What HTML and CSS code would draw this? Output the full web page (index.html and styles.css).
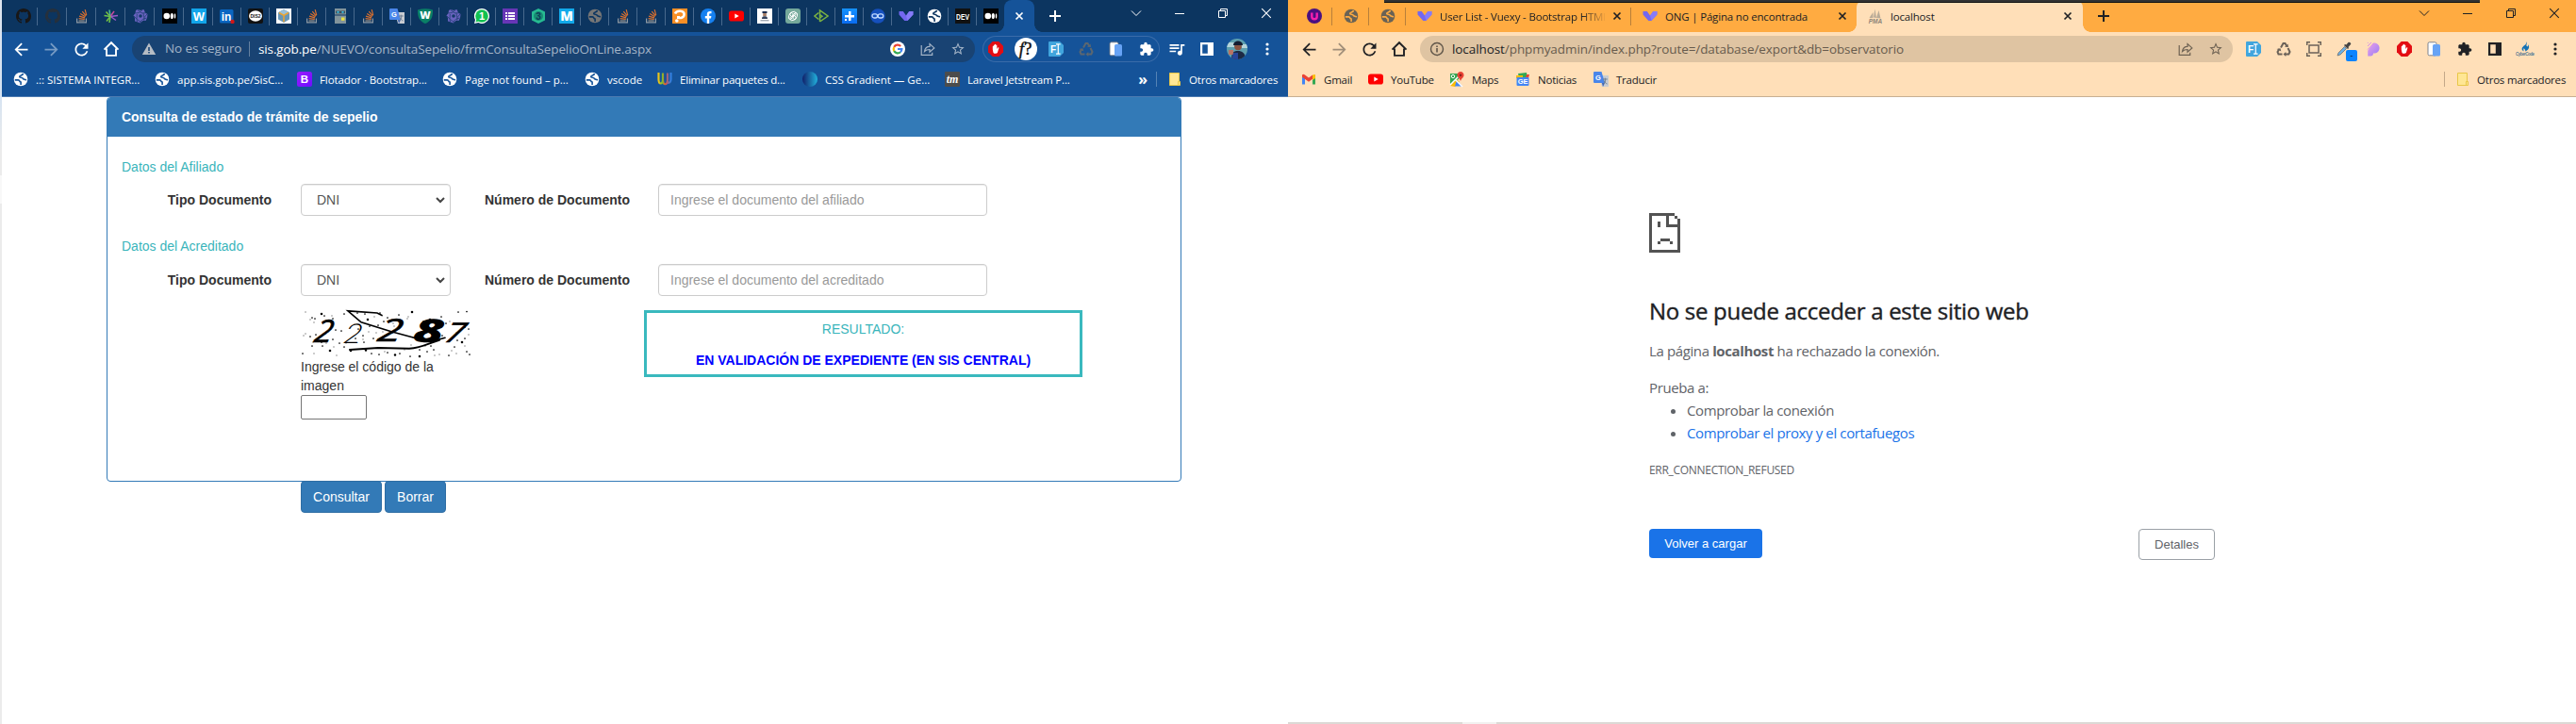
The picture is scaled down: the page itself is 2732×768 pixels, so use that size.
FILE: index.html
```html
<!DOCTYPE html>
<html lang="es">
<head>
<meta charset="utf-8">
<title>Escritorio</title>
<link rel="stylesheet" href="styles.css">
</head>
<body>
<svg class="defs" aria-hidden="true">
  <defs>
    <linearGradient id="g-css" x1="0" x2="1"><stop offset="0" stop-color="#10206a"/><stop offset="1" stop-color="#22b1dc"/></linearGradient>
    <linearGradient id="g-w" x1="0" x2="1"><stop offset="0" stop-color="#e9c21c"/><stop offset=".3" stop-color="#7fbf2a"/><stop offset=".55" stop-color="#e8503a"/><stop offset="1" stop-color="#2f7fe0"/></linearGradient>
    <linearGradient id="g-p" x1="0" y1="0" x2="1" y2="1"><stop offset="0" stop-color="#e9a0e8"/><stop offset="1" stop-color="#9a7cf5"/></linearGradient>
    <linearGradient id="g-b" x1="0" y1="0" x2="1" y2="1"><stop offset="0" stop-color="#9a1bff"/><stop offset="1" stop-color="#6c0fff"/></linearGradient>
    <linearGradient id="g-plus" x1="0" y1="0" x2="0" y2="1"><stop offset="0" stop-color="#1592ff"/><stop offset="1" stop-color="#0a6cf0"/></linearGradient>
    <symbol id="gh" viewBox="0 0 16 16"><path fill="currentColor" d="M8 0C3.58 0 0 3.58 0 8c0 3.54 2.29 6.53 5.47 7.59.4.07.55-.17.55-.38 0-.19-.01-.82-.01-1.49-2.01.37-2.53-.49-2.69-.94-.09-.23-.48-.94-.82-1.13-.28-.15-.68-.52-.01-.53.63-.01 1.08.58 1.23.82.72 1.21 1.87.87 2.33.66.07-.52.28-.87.51-1.07-1.78-.2-3.64-.89-3.64-3.95 0-.87.31-1.59.82-2.15-.08-.2-.36-1.02.08-2.12 0 0 .67-.21 2.2.82.64-.18 1.32-.27 2-.27s1.36.09 2 .27c1.53-1.04 2.2-.82 2.2-.82.44 1.1.16 1.92.08 2.12.51.56.82 1.27.82 2.15 0 3.07-1.87 3.75-3.65 3.95.29.25.54.73.54 1.48 0 1.07-.01 1.93-.01 2.2 0 .21.15.46.55.38A8.01 8.01 0 0 0 16 8c0-4.42-3.58-8-8-8z"/></symbol>
    <symbol id="so" viewBox="0 0 16 16"><g fill="none"><path stroke="#8f9aa3" stroke-width="1.2" d="M2.6 10.5v4.4h9.8v-4.4"/><path stroke="#9a8f88" stroke-width="1.2" d="M4.5 13h6.2"/><path stroke="#d8702f" stroke-width="1.2" d="M4.6 10.7l6.2.6M5 8.2l6 1.7M6.2 5.6l5.3 3.2M8.3 3.1l3.9 4.8M11.2 1.2l1.5 6"/></g></symbol>
    <symbol id="burst" viewBox="0 0 16 16"><g fill="none" stroke-width="1.500"><path stroke="#7ac142" d="M7 8.500L2.500 3.500M7 8.500l-4 5"/><path stroke="#4dbf9b" d="M7 8.500L6 1.500"/><path stroke="#c9499a" d="M7 8.500L11 3"/><path stroke="#9b59c8" d="M7 8.500l8-1M7.400 8.500l5.500 4"/></g><path stroke="#69c24a" stroke-width="1.600" d="M7 8l-1 7M.5 7.500L7 8.500"/></symbol>
    <symbol id="knot" viewBox="0 0 16 16"><path fill="#6a63c0" d="M5 1l3 1 3.500-1L13 4.500l2.500 1.500L15 10l-1.500 3-3.200 0L8 15.500 5 14.500 2 13.500 2 10 .5 7.500 2.500 5 3 2z"/><path fill="none" stroke="#123a68" stroke-width=".7" d="M5 1.500l4 3.300 4.500 0M2.500 5l4-.5 3.500-3M1 8l3 3.200.5 3.300M4 11l.3-5M9 15l-4.500-3.500M14.500 10l-4 1.300-3 3M15 6l-3 3.500-.2 3.500M11.800 9.500L11 5"/><circle cx="8" cy="8" r="1.800" fill="#123a68"/></symbol>
    <symbol id="medium" viewBox="0 0 16 16"><path d="M0 0h16v16H0z"/><g fill="#fff"><circle cx="4.800" cy="8" r="3.300"/><ellipse cx="10.300" cy="8" rx="1.600" ry="3.100"/><ellipse cx="13.500" cy="8" rx=".8" ry="2.700"/></g></symbol>
    <symbol id="wsq" viewBox="0 0 16 16"><path fill="#12a5ea" d="M0 0h16v16H0z"/><text x="8" y="13" class="t-bold" font-size="13" fill="#fff">W</text></symbol>
    <symbol id="linkedin" viewBox="0 0 16 16"><rect width="14.500" height="14.500" y="1" rx="1.500" fill="#0a66c2"/><text x="7" y="13" class="t-bold" font-size="12" fill="#fff">in</text><circle cx="13.500" cy="14" r="2.200" fill="#d31616"/></symbol>
    <symbol id="badge" viewBox="0 0 16 16"><rect width="16" height="16" rx="2" fill="#111"/><ellipse cx="8" cy="8" rx="7" ry="5.800" fill="#fff"/><text x="8" y="10" class="t-bold" font-size="5" fill="#222">DIS2</text></symbol>
    <symbol id="cube" viewBox="0 0 16 16"><path fill="#fff" d="M0 0h16v16H0z"/><path fill="#6796b8" d="M8 1l6 3.300v7.200L8 15l-6-3.500V4.300z"/><path fill="#9ac0d8" d="M8 1l6 3.300L8 7.600 2 4.300z"/><path fill="none" stroke="#eea42d" stroke-width="1.500" d="M3 4.500l5 3 5-3M8 7.500v6.800"/></symbol>
    <symbol id="bot" viewBox="0 0 16 16"><path fill="#82949b" d="M2 0h12v6.500H2zM2 7.500h12V16H2z"/><path fill="#3e505a" d="M3 2.500h10v2.800H3z"/><path fill="#35c5ee" d="M4.500 3h2v1.800h-2zM9.500 3h2v1.800h-2z"/><path fill="#e8df3e" d="M9 9.500h3.500v3.300H9z"/></symbol>
    <symbol id="trans" viewBox="0 0 16 16"><path fill="#c8ccd2" d="M6 4h10v12H9z"/><path fill="#4a86ea" d="M1 0h7.500l3.500 12H1a1 1 0 0 1-1-1V1a1 1 0 0 1 1-1z"/><path fill="#355fb5" d="M9 12h3l-2 4z"/><text x="4.800" y="9" class="t-bold" font-size="7.500" fill="#fff">G</text><path fill="none" stroke="#6e7f92" d="M9.800 8h5M12.300 6.700V8c1 2.600-1 4.500-2 5M11 9.500c1 2 2 3 3.500 3.500"/></symbol>
    <symbol id="wgreen" viewBox="0 0 16 16"><path fill="#0a8066" d="M0 1.500Q8-1 16 1.500C16.300 9 14 13.500 8 16 2 13.500-.3 9 0 1.500z"/><text x="8" y="11" class="t-black" font-size="11" fill="#fff">W</text></symbol>
    <symbol id="wa" viewBox="0 0 16 16"><path fill="#fff" d="M8 0a8 8 0 1 1-3.700 15.100L0 16l1-4A8 8 0 0 1 8 0z"/><circle cx="8" cy="8" r="6.800" fill="#12c152"/><path fill="#12c152" d="M1.500 14.500l1-3.500 2.500 2.500z"/><text x="8" y="12" class="t-bold" font-size="11" fill="#fff">1</text></symbol>
    <symbol id="forms" viewBox="0 0 16 16"><rect width="16" height="16" fill="#6736b6"/><path fill="#fff" d="M3 4h2v2H3zM6 4h7v2H6zM3 7h2v2H3zM6 7h7v2H6zM3 10h2v2H3zM6 10h7v2H6z"/></symbol>
    <symbol id="hex3" viewBox="0 0 16 16"><path fill="#27bb92" d="M8 0l7 3.600v8.800L8 16l-7-3.600V3.600z"/><circle cx="8" cy="8" r="5" fill="#178b74"/><text x="8" y="11.500" class="t-bold" font-size="10" fill="#0d3a58">3</text></symbol>
    <symbol id="msq" viewBox="0 0 16 16"><path fill="#12a9ea" d="M0 0h16v16H0z"/><text x="8" y="13" class="t-black" font-size="14" fill="#fff">M</text></symbol>
    <symbol id="globe" viewBox="0 0 16 16"><circle cx="8" cy="8" r="7.300" fill="currentColor"/><g fill="none" stroke="var(--cut)" stroke-width="1.600"><path d="M1.800 8.900h3.600c1.800 0 .8 2 2.700 2.200v3"/><path d="M10.300 2c.3 2.300-3.600 1.600-3.600 3.300 0 1.500 2.700.3 3.500 1.800.5 1.500 1.800 1.600 3.900 1.700"/></g></symbol>
    <symbol id="porange" viewBox="0 0 16 16"><path fill="#f98f25" d="M0 0h16v16H0z"/><path fill="none" stroke="#fff" stroke-width="2.600" d="M3 5.500C4.500 1.500 12.800 1.800 12.600 6.300c-.2 4-4.600 4.200-6.600 3.200"/><circle cx="4.800" cy="13" r="1.800" fill="#fff"/><path fill="#fff" d="M5 8h3v3H5z"/></symbol>
    <symbol id="fb" viewBox="0 0 16 16"><circle cx="8" cy="8" r="8" fill="#1580f0"/><path fill="#fff" d="M6.800 16v-5.500H4.800V8h2V6.300c0-2.100 1.200-3.200 3-3.200.9 0 1.700.1 1.700.1v2h-1c-1 0-1.300.6-1.300 1.200V8h2.200l-.4 2.500H9.200V16z"/></symbol>
    <symbol id="yt" viewBox="0 0 16 16"><rect y="2.400" width="16" height="11.200" rx="2.800" fill="#f00"/><path fill="#fff" d="M6.300 5.500v5l4.400-2.500z"/></symbol>
    <symbol id="person" viewBox="0 0 16 16"><path fill="#fff" d="M0 0h16v16H0z"/><path fill="#1d2f50" d="M5.500 3h5v2h-5z"/><path fill="#a87e66" d="M6.200 5h3.600v3H6.200z"/><path fill="#33415c" d="M5 11c0-2.300 1.300-2.700 3-2.700s3 .4 3 2.700z"/><path fill="#7d8797" d="M3.500 12.300h9v1h-9z"/></symbol>
    <symbol id="gpt" viewBox="0 0 16 16"><rect width="16" height="16" rx="3" fill="#75a99b"/><g fill="none" stroke="#fff" stroke-width=".9"><ellipse cx="8" cy="5.800" rx="3.300" ry="2.300" transform="rotate(-20 8 5.800)"/><ellipse cx="8" cy="10.200" rx="3.300" ry="2.300" transform="rotate(-20 8 10.200)"/><ellipse cx="5.700" cy="8" rx="2" ry="3.800" transform="rotate(20 5.700 8)"/><ellipse cx="10.300" cy="8" rx="2" ry="3.800" transform="rotate(20 10.300 8)"/></g></symbol>
    <symbol id="code" viewBox="0 0 16 16"><g fill="none" stroke="#7cb342" stroke-width="1.500"><path d="M5.200 4.500L1 8l4.200 3.500M6.500 14V2l8.500 6-8.500 6"/><path d="M6.500 6.500L9 8.200 6.500 10"/></g></symbol>
    <symbol id="plussq" viewBox="0 0 16 16"><path fill="url(#g-plus)" d="M0 0h16v16H0z"/><path fill="#fff" d="M7 3h2.500v4H13v2.500H9.500V13H7V9.500H3V7h4zM3 11h2v2H3z"/></symbol>
    <symbol id="cc" viewBox="0 0 16 16"><circle cx="8" cy="8" r="7.800" fill="#1650bd"/><g fill="none" stroke="#c4dcff" stroke-width="1.300"><rect x="2" y="5.800" width="5.500" height="4.200" rx="2"/><rect x="8.200" y="5.800" width="5.500" height="4.200" rx="2"/></g></symbol>
    <symbol id="vuexy" viewBox="0 0 16 16"><path fill="#7367f0" d="M.5 3h4.300L8 7.500 11.200 3h4.300v3.500L9.500 13H6.300L.5 6.500z"/><path fill="#9388ff" d="M11.200 3h4.300v3.500L9.500 13 8 7.500z" opacity=".6"/></symbol>
    <symbol id="dev" viewBox="0 0 16 16"><path fill="#111" d="M0 0h16v16H0z"/><text x="8" y="11.800" class="t-bold" font-size="8.500" textLength="14" lengthAdjust="spacingAndGlyphs" fill="#fff">DEV</text></symbol>
    <symbol id="ucircle" viewBox="0 0 16 16"><circle cx="8" cy="8" r="8" fill="#4a1080"/><path d="M5.300 4.500v4.300c0 3.300 5.400 3.300 5.400 0V4.500" fill="none" stroke="#f51fae" stroke-width="2.400"/></symbol>
    <symbol id="pma" viewBox="0 0 16 16"><path fill="#b9ab97" d="M6 9.500L7.500.5 9 10zM1.500 10l4-6v6zM9 10l2.500-8 2 8.500z"/><text x="8" y="15.700" class="t-bold" font-size="6.500" font-style="italic" fill="#8d8478">PMA</text></symbol>
    <symbol id="back" viewBox="0 0 24 24"><path fill="currentColor" d="M20 11H7.830l5.590-5.590L12 4l-8 8 8 8 1.410-1.410L7.830 13H20v-2z"/></symbol>
    <symbol id="reload" viewBox="0 0 24 24"><path fill="currentColor" d="M17.650 6.350C16.200 4.900 14.210 4 12 4c-4.420 0-7.990 3.580-7.990 8s3.570 8 7.990 8c3.730 0 6.840-2.550 7.730-6h-2.080c-.82 2.330-3.040 4-5.650 4-3.310 0-6-2.690-6-6s2.690-6 6-6c1.660 0 3.140.69 4.220 1.780L13 11h7V4l-2.350 2.350z"/></symbol>
    <symbol id="home" viewBox="0 0 18 18"><path fill="none" stroke="currentColor" stroke-width="1.900" d="M1.500 9.600L9 2.200l7.500 7.400M4 8.500v7.400h10V8.500"/></symbol>
    <symbol id="star" viewBox="0 0 24 24"><path fill="currentColor" d="M22 9.240l-7.190-.62L12 2 9.190 8.630 2 9.240l5.460 4.730L5.820 21 12 17.270 18.180 21l-1.630-7.030L22 9.240zM12 15.400l-3.760 2.270 1-4.280-3.320-2.880 4.380-.38L12 6.100l1.710 4.040 4.380.38-3.320 2.880 1 4.280L12 15.400z"/></symbol>
    <symbol id="share" viewBox="0 0 16 16"><path fill="none" stroke="currentColor" stroke-width="1.200" d="M1.200 4v10.400h11.500v-2.600M4.500 10.500C5 6.500 7 5.300 10 5.300V2.600l4.800 4.300-4.800 4.200V8.500c-2.500 0-4 .3-5.500 2z"/></symbol>
    <symbol id="puzzle" viewBox="0 0 24 24"><path fill="currentColor" d="M20.500 11H19V7c0-1.100-.9-2-2-2h-4V3.500C13 2.120 11.880 1 10.500 1S8 2.120 8 3.500V5H4c-1.100 0-1.990.9-1.990 2v3.800H3.500c1.490 0 2.700 1.210 2.700 2.700s-1.210 2.700-2.700 2.700H2V20c0 1.100.9 2 2 2h3.800v-1.500c0-1.490 1.210-2.700 2.700-2.700 1.490 0 2.700 1.210 2.700 2.700V22H17c1.100 0 2-.9 2-2v-4h1.500c1.380 0 2.500-1.120 2.500-2.500S21.880 11 20.500 11z"/></symbol>
    <symbol id="queue" viewBox="0 0 24 24"><path fill="currentColor" d="M15 6H3v2h12V6zm0 4H3v2h12v-2zM3 16h8v-2H3v2zM17 6v8.180c-.31-.11-.65-.18-1-.18-1.660 0-3 1.340-3 3s1.340 3 3 3 3-1.340 3-3V8h3V6h-5z"/></symbol>
    <symbol id="side" viewBox="0 0 16 16"><path fill="currentColor" fill-rule="evenodd" d="M1 1h14v14H1zM3.200 3.200v9.600h5.600V3.200z"/></symbol>
    <symbol id="dots" viewBox="0 0 16 16"><g fill="currentColor"><circle cx="8" cy="3" r="1.600"/><circle cx="8" cy="8" r="1.600"/><circle cx="8" cy="13" r="1.600"/></g></symbol>
    <symbol id="abp" viewBox="0 0 16 16"><path fill="#e30d13" d="M4.700 0h6.600L16 4.700v6.600L11.300 16H4.700L0 11.300V4.700z"/><path fill="#fff" d="M4.800 8.500V5.300c0-.8 1-.8 1 0V4c0-.8 1.100-.8 1.100 0v-.6c0-.8 1.200-.8 1.200 0V4c0-.8 1.200-.8 1.200 0v4l1-1.500c.6-.6 1.300 0 1 .7L9.800 12c-.6 1-3.600 1.200-4.300 0z"/></symbol>
    <symbol id="fquest" viewBox="0 0 24 24"><circle cx="12" cy="12" r="12" fill="#fff"/><text x="11.500" y="17.500" class="t-serif" font-size="19" stroke="#111" stroke-width=".4" fill="#111"><tspan font-style="italic">f</tspan>?</text></symbol>
    <symbol id="fi" viewBox="0 0 16 16"><path fill="#41a5dd" d="M1 0h11l4 4v8l-4 4H1a1 1 0 0 1-1-1V1a1 1 0 0 1 1-1z"/><text x="5" y="11.700" class="t-bold" font-size="10" fill="#fff">F</text><path fill="none" stroke="#fff" stroke-width="1.200" d="M8 2.800h4.600M8 13.200h4.600M10.300 2.800v10.400"/></symbol>
    <symbol id="recycle" viewBox="0 0 16 16"><g fill="none" stroke="currentColor" stroke-width="2"><path d="M5 6.500L7.500 2h2l1.800 3"/><path d="M12.500 7l2 4-1.200 2.500H9.500"/><path d="M6.500 13.500h-4L1.500 11l1.800-3"/></g><path fill="currentColor" d="M9 5.800l4 .2-.5-3.500zM10.300 11v5L7.500 13.500zM.5 8l4-.8.800 3.200z"/></symbol>
    <symbol id="doc" viewBox="0 0 16 16"><rect x="1" y=".8" width="9" height="14" rx="1.500" fill="#fff" stroke="#6c7686" stroke-width=".9"/><rect x="6" y="3" width="8" height="12.500" rx="1.500" fill="#67a3f5"/></symbol>
    <symbol id="frame" viewBox="0 0 16 16"><path fill="none" stroke="currentColor" stroke-width="1.500" d="M.7 4V.8H4M12 .8h3.300V4M15.300 12v3.200H12M4 15.200H.7V12M3 4h10v8H3z"/></symbol>
    <symbol id="dropper" viewBox="0 0 16 16"><path fill="#6db1e5" stroke="#666" stroke-width=".7" d="M1 15l1-3 6.500-6.500 2 2L4 14z"/><path fill="#444" d="M8 4l1-1 1.300.6L12.500 1c1-1.200 3.500.8 2.600 2L12.500 6l.5 1-1 1z"/></symbol>
    <symbol id="pgrad" viewBox="0 0 16 16"><path fill="url(#g-p)" d="M7 1.500a5.500 5.500 0 0 1 2 11H7c0 2-1 3-3 3H1.200V9.800z"/><path stroke="#d88ce8" stroke-width="1" d="M1 5l4-4M1 8.500L7.500 2M1 1.800l.8-.8"/></symbol>
    <symbol id="cyber" viewBox="0 0 20 16"><path fill="#1572b5" d="M11 0c2 3-1 4 1.500 5.500C13.500 4.500 13 3 13 3c2.500 3 .5 6.500-3 7.500 1-2-1-2-1-3.500-1 1-1 2.500 0 3.500C5 9 6.500 6 9.500 4c1.500-1 2-2.500 1.500-4z"/><text x="10" y="15" class="t-bold" font-size="4.500" fill="#567b95" textLength="20">CyberCode</text></symbol>
    <symbol id="chev" viewBox="0 0 16 16"><path fill="none" stroke="currentColor" d="M3 5.500l5 5 5-5"/></symbol>
    <symbol id="min" viewBox="0 0 16 16"><path fill="none" stroke="currentColor" d="M3 8.500h10"/></symbol>
    <symbol id="restore" viewBox="0 0 16 16"><path fill="none" stroke="currentColor" d="M3.500 5.500h7v7h-7zM5.500 5.500v-2h7v7h-2"/></symbol>
    <symbol id="close" viewBox="0 0 16 16"><path fill="none" stroke="currentColor" stroke-width="1.100" d="M3.200 3.200l9.600 9.600M12.800 3.200l-9.600 9.600"/></symbol>
    <symbol id="tabx" viewBox="0 0 16 16"><path fill="none" stroke="currentColor" stroke-width="1.700" d="M4.500 4.500l7 7M11.500 4.500l-7 7"/></symbol>
    <symbol id="plus" viewBox="0 0 16 16"><path fill="none" stroke="currentColor" stroke-width="2" d="M8 2v12M2 8h12"/></symbol>
    <symbol id="folder" viewBox="0 0 14 16"><path fill="#ffe694" stroke="#e8c648" d="M1.500 1.500h10v13h-10z"/><path fill="#ffe694" stroke="#e8c648" d="M10.500 10.500h2v4h-2z"/></symbol>
  </defs>
</svg>

<main class="desktop">
  <div class="edge"></div>

  <section class="window blue">
    <header class="tabbar">
      <div class="tabs">
        <span class="tab wide"><svg class="i16 gh1"><use href="#gh"/></svg></span>
        <span class="tab wide"><svg class="i16 gh2"><use href="#gh"/></svg></span>
        <span class="tab wide"><svg class="i16"><use href="#so"/></svg></span>
        <span class="tab wide"><svg class="i16"><use href="#burst"/></svg></span>
        <span class="tab wide"><svg class="i16"><use href="#knot"/></svg></span>
        <span class="tab wide"><svg class="i16"><use href="#medium"/></svg></span>
        <span class="tab wide"><svg class="i16"><use href="#wsq"/></svg></span>
        <span class="tab"><svg class="i16"><use href="#linkedin"/></svg></span>
        <span class="tab"><svg class="i16"><use href="#badge"/></svg></span>
        <span class="tab"><svg class="i16"><use href="#cube"/></svg></span>
        <span class="tab"><svg class="i16"><use href="#so"/></svg></span>
        <span class="tab"><svg class="i16"><use href="#bot"/></svg></span>
        <span class="tab"><svg class="i16"><use href="#so"/></svg></span>
        <span class="tab"><svg class="i16"><use href="#trans"/></svg></span>
        <span class="tab"><svg class="i16"><use href="#wgreen"/></svg></span>
        <span class="tab"><svg class="i16"><use href="#knot"/></svg></span>
        <span class="tab"><svg class="i16"><use href="#wa"/></svg></span>
        <span class="tab"><svg class="i16"><use href="#forms"/></svg></span>
        <span class="tab"><svg class="i16"><use href="#hex3"/></svg></span>
        <span class="tab"><svg class="i16"><use href="#msq"/></svg></span>
        <span class="tab"><svg class="i16 gray"><use href="#globe"/></svg></span>
        <span class="tab"><svg class="i16"><use href="#so"/></svg></span>
        <span class="tab"><svg class="i16"><use href="#so"/></svg></span>
        <span class="tab"><svg class="i16"><use href="#porange"/></svg></span>
        <span class="tab"><svg class="i16"><use href="#fb"/></svg></span>
        <span class="tab"><svg class="i16"><use href="#yt"/></svg></span>
        <span class="tab"><svg class="i16"><use href="#person"/></svg></span>
        <span class="tab"><svg class="i16"><use href="#gpt"/></svg></span>
        <span class="tab"><svg class="i16"><use href="#code"/></svg></span>
        <span class="tab"><svg class="i16"><use href="#plussq"/></svg></span>
        <span class="tab"><svg class="i16"><use href="#cc"/></svg></span>
        <span class="tab"><svg class="i16"><use href="#vuexy"/></svg></span>
        <span class="tab"><svg class="i16"><use href="#globe"/></svg></span>
        <span class="tab"><svg class="i16"><use href="#dev"/></svg></span>
        <span class="tab last"><svg class="i16"><use href="#medium"/></svg></span>
        <span class="tab active"><svg class="i16"><use href="#tabx"/></svg></span>
        <svg class="i16 newtab"><use href="#plus"/></svg>
      </div>
      <div class="controls">
        <svg class="i16"><use href="#chev"/></svg><svg class="i16"><use href="#min"/></svg><svg class="i16"><use href="#restore"/></svg><svg class="i16"><use href="#close"/></svg>
      </div>
    </header>
    <div class="toolbar">
      <span class="cell"><svg class="i21"><use href="#back"/></svg></span>
      <span class="cell off"><svg class="i21 flip"><use href="#back"/></svg></span>
      <span class="cell"><svg class="i21"><use href="#reload"/></svg></span>
      <span class="cell"><svg class="i18"><use href="#home"/></svg></span>
      <div class="omnibox">
        <svg class="i16" viewBox="0 0 16 16"><path fill="#b6bcc4" fill-rule="evenodd" d="M8 1.500L15.200 14H.8zM7.200 6v4h1.600V6zm0 5v1.500h1.600V11z"/></svg>
        <span class="insecure">No es seguro</span>
        <span class="url"><b>sis.gob.pe</b>/NUEVO/consultaSepelio/frmConsultaSepelioOnLine.aspx</span>
        <span class="actions">
          <svg class="i16" viewBox="0 0 16 16"><circle cx="8" cy="8" r="8" fill="#fff"/><g fill="none" stroke-width="2.200"><path stroke="#ea4335" d="M4.200 5.900A4.400 4.400 0 0 1 11.200 5"/><path stroke="#fbbc05" d="M4.200 10.100a4.400 4.400 0 0 1 0-4.200"/><path stroke="#34a853" d="M11 11.200a4.400 4.400 0 0 1-6.800-1.100"/><path stroke="#4285f4" d="M8 8h4.400a4.400 4.400 0 0 1-1.400 3.200"/></g></svg>
          <svg class="i16"><use href="#share"/></svg>
          <svg class="i16"><use href="#star"/></svg>
        </span>
      </div>
      <div class="pill">
        <svg class="i16"><use href="#abp"/></svg>
        <span class="slot"><svg class="i24"><use href="#fquest"/></svg></span>
        <svg class="i16"><use href="#fi"/></svg>
        <svg class="i16 brown"><use href="#recycle"/></svg>
        <svg class="i16"><use href="#doc"/></svg>
        <svg class="i16"><use href="#puzzle"/></svg>
      </div>
      <span class="cell"><svg class="i20"><use href="#queue"/></svg></span>
      <span class="cell"><svg class="i16"><use href="#side"/></svg></span>
      <span class="cell"><svg class="i22" viewBox="0 0 22 22"><clipPath id="av"><circle cx="11" cy="11" r="11"/></clipPath><g clip-path="url(#av)"><path fill="#5d9fae" d="M0 0h22v22H0z"/><path fill="#b5d4d9" d="M0 4h8v5H0zM16 6h6v4h-6z"/><path fill="#1d2a45" d="M5 22c0-8 3-9 7-9s8 2 8 9z"/><circle cx="12" cy="8.500" r="3.800" fill="#8a5340"/><path fill="#141c30" d="M7 7c0-6 10-6 10 0z"/><path fill="#b97464" d="M2 12h5v5H2z"/><path fill="#27469b" d="M7 15h5v7H5z"/></g></svg></span>
      <span class="cell"><svg class="i16"><use href="#dots"/></svg></span>
    </div>
    <nav class="bookmarks">
      <span class="bm w150"><svg class="i16"><use href="#globe"/></svg><span class="l1">.:: SISTEMA INTEGR...</span></span>
      <span class="bm w151"><svg class="i16"><use href="#globe"/></svg><span class="l2">app.sis.gob.pe/SisC...</span></span>
      <span class="bm w154"><svg class="i16" viewBox="0 0 16 16"><rect width="16" height="16" rx="2.500" fill="url(#g-b)"/><text x="8" y="12.200" class="t-bold" font-size="11.500" fill="#fff">B</text></svg><span class="l3">Flotador · Bootstrap...</span></span>
      <span class="bm w151"><svg class="i16"><use href="#globe"/></svg><span class="l4">Page not found – p...</span></span>
      <span class="bm w77"><svg class="i16"><use href="#globe"/></svg><span class="l5">vscode</span></span>
      <span class="bm w154"><svg class="i16" viewBox="0 0 16 16"><path fill="none" stroke="url(#g-w)" stroke-width="2.200" d="M1.500 1v7c0 6 4.500 6 4.500 0V1.500M6 8c0 7 5 7 5 0V1.500M11 12c2.500 0 3.500-2 3.500-4V1"/></svg><span class="l6">Eliminar paquetes d...</span></span>
      <span class="bm w151"><svg class="i16" viewBox="0 0 16 16"><circle cx="8" cy="8" r="8" fill="url(#g-css)"/></svg><span class="l7">CSS Gradient — Ge...</span></span>
      <span class="bm"><svg class="i16" viewBox="0 0 16 16"><rect width="16" height="16" rx="1" fill="#4c4c4c"/><text x="8" y="12" class="t-serif t-heavy" font-size="12" font-style="italic" fill="#fff">tm</text></svg><span class="l8">Laravel Jetstream P...</span></span>
      <span class="more">»</span>
      <span class="other"><svg class="fold"><use href="#folder"/></svg><span>Otros marcadores</span></span>
    </nav>
    <div class="page sis">
      <div class="panel">
        <h3 class="heading">Consulta de estado de trámite de sepelio</h3>
        <div class="panelbody">
          <p class="section">Datos del Afiliado</p>
          <div class="row">
            <label class="first">Tipo Documento</label>
            <div class="select">DNI<svg viewBox="0 0 10 6"><path d="M1 1l4 4 4-4" fill="none" stroke="#444" stroke-width="2"/></svg></div>
            <label class="second">Número de Documento</label>
            <input class="field" type="text" placeholder="Ingrese el documento del afiliado">
          </div>
          <p class="section">Datos del Acreditado</p>
          <div class="row">
            <label class="first">Tipo Documento</label>
            <div class="select">DNI<svg viewBox="0 0 10 6"><path d="M1 1l4 4 4-4" fill="none" stroke="#444" stroke-width="2"/></svg></div>
            <label class="second">Número de Documento</label>
            <input class="field" type="text" placeholder="Ingrese el documento del acreditado">
          </div>
          <div class="lower">
            <div class="captcha">
              <svg class="capimg" viewBox="0 0 180 50">
                <g font-family="Open Sans, sans-serif" font-style="italic">
                  <text transform="translate(13 34) skewX(-12)" font-size="33" font-weight="500" stroke="#000" stroke-width=".6" textLength="19" lengthAdjust="spacingAndGlyphs">2</text>
                  <text transform="translate(44 34.500) skewX(-10)" font-size="29" font-family="Lato, sans-serif" font-weight="300" textLength="20" lengthAdjust="spacingAndGlyphs">2</text>
                  <text transform="translate(80 33) skewX(-14)" font-size="33" font-weight="500" stroke="#000" stroke-width=".6" textLength="25" lengthAdjust="spacingAndGlyphs">2</text>
                  <text transform="translate(118 34) skewX(-6)" font-size="34" font-weight="800" textLength="33" lengthAdjust="spacingAndGlyphs">8</text>
                  <text transform="translate(151 34) skewX(-16)" font-size="29" font-weight="500" stroke="#000" stroke-width=".6" textLength="21" lengthAdjust="spacingAndGlyphs">7</text>
                </g>
                <g fill="none" stroke="#000" stroke-linecap="round"><path stroke-width="1.700" d="M86 5.500L81 3 50 .8l14 12 32 10 26 7c12 3.500 22 3 31-.500"/><path stroke-width="2" d="M52 42l30-2 33 .8c14-.8 21-6 32-9"/></g>
                <g stroke="#000" stroke-linecap="round" fill="none">
                  <path stroke-width="2.600" d="M22 4v0M31 43v0M118 2v0M100 47.500v0M137 10v0M53 43v0M171 34v0M126 49v0M71 10v0M69 42.500v0"/>
                  <path stroke-width="1.700" d="M25 6v0M12 8v0M15 9v0M46 4v0M34 9v0M37 21v0M43 22v0M10 28v0M16 26v0M12 38v0M23 38v0M2 46v0M34 31v0M41 35v0M46 39v0M60 3v0M68 4v0M84 3v0M88 12v0M82 16v0M73 17v0M61 20v0M92 8v0M104 5v0M130 12v0M149 7v0M154 14v0M167 2v0M176 1.500v0M174 18v0M178 20v0M174 30v0M163 39v0M176 44v0M179 47v0M157 48v0M141 42v0M134 44v0M138 38v0M105 46v0M92 45v0M83 47v0M75 46v0M77 30v0M66 27v0M58 30v0M166 32v0M116 49v0M126 42v0M67 34v0M28 32v0M22 34v0M150 27v0"/>
                  <path stroke-width="1" d="M5 2v0M10 10v0M14 13v0M33 6v0M27 12v0M5 25v0M3 27v0M17 31v0M13 34v0M27 35v0M35 39v0M14 46v0M38 48v0M48 35v0M57 15v0M78 7v0M80 24v0M87 23v0M98 14v0M99 17v0M114 7v0M113 9v0M117 37v0M132 38v0M148 13v0M158 12v0M174 38v0M178 26v0M160 43v0M147 47v0M165 46v0M89 44v0M110 42v0M72 23v0M66 31v0M165 24v0M142 48v0"/>
                </g>
              </svg>
              <p>Ingrese el código de la imagen</p>
              <input class="code" type="text">
            </div>
            <div class="result"><span>RESULTADO:</span><strong>EN VALIDACIÓN DE EXPEDIENTE (EN SIS CENTRAL)</strong></div>
          </div>
        </div>
      </div>
      <div class="buttons"><button class="b1">Consultar</button><button class="b2">Borrar</button></div>
    </div>
  </section>

  <section class="window orange">
    <div class="backstrip"></div>
    <header class="tabbar">
      <div class="tabs">
        <span class="tab"><svg class="i16"><use href="#ucircle"/></svg></span>
        <span class="tab"><svg class="i16 gray"><use href="#globe"/></svg></span>
        <span class="tab"><svg class="i16 gray"><use href="#globe"/></svg></span>
        <span class="tab long"><svg class="i16"><use href="#vuexy"/></svg><span class="title fade">User List - Vuexy - Bootstrap HTML</span><svg class="i16"><use href="#tabx"/></svg></span>
        <span class="tab long last"><svg class="i16"><use href="#vuexy"/></svg><span class="title">ONG | Página no encontrada</span><svg class="i16"><use href="#tabx"/></svg></span>
        <span class="tab long active"><svg class="i16"><use href="#pma"/></svg><span class="title">localhost</span><svg class="i16"><use href="#tabx"/></svg></span>
        <svg class="i16 newtab"><use href="#plus"/></svg>
      </div>
      <div class="controls">
        <svg class="i16"><use href="#chev"/></svg><svg class="i16"><use href="#min"/></svg><svg class="i16"><use href="#restore"/></svg><svg class="i16"><use href="#close"/></svg>
      </div>
    </header>
    <div class="toolbar">
      <span class="cell"><svg class="i21"><use href="#back"/></svg></span>
      <span class="cell off"><svg class="i21 flip"><use href="#back"/></svg></span>
      <span class="cell"><svg class="i21"><use href="#reload"/></svg></span>
      <span class="cell"><svg class="i18"><use href="#home"/></svg></span>
      <div class="omnibox">
        <svg class="i16" viewBox="0 0 16 16"><circle cx="8" cy="8" r="6.500" fill="none" stroke="#5f5549" stroke-width="1.400"/><path fill="#5f5549" d="M7.200 7h1.600v4.500H7.200zM7.200 4.500h1.600V6H7.200z"/></svg>
        <span class="url"><b>localhost</b>/phpmyadmin/index.php?route=/database/export&amp;db=observatorio</span>
        <span class="actions"><svg class="i16"><use href="#share"/></svg><svg class="i16"><use href="#star"/></svg></span>
      </div>
      <span class="cell"><svg class="i16"><use href="#fi"/></svg></span>
      <span class="cell dim"><svg class="i16"><use href="#recycle"/></svg></span>
      <span class="cell dim"><svg class="i16"><use href="#frame"/></svg></span>
      <span class="cell"><svg class="i16"><use href="#dropper"/></svg><i class="count">-</i></span>
      <span class="cell"><svg class="i16"><use href="#pgrad"/></svg></span>
      <span class="cell"><svg class="i16"><use href="#abp"/></svg></span>
      <span class="cell"><svg class="i16"><use href="#doc"/></svg></span>
      <span class="cell"><svg class="i16"><use href="#puzzle"/></svg></span>
      <span class="cell"><svg class="i16"><use href="#side"/></svg></span>
      <span class="cell"><svg class="i20w"><use href="#cyber"/></svg></span>
      <span class="cell"><svg class="i16"><use href="#dots"/></svg></span>
    </div>
    <nav class="bookmarks">
      <span class="bm r71"><svg class="i16" viewBox="0 0 16 16"><path fill="#4285f4" d="M1 4v9.500h3V6z"/><path fill="#34a853" d="M12 6v7.500h3V4z"/><path fill="#fbbc04" d="M12 3.500L15 3v4l-3 2z"/><path fill="#ea4335" d="M1 3.500Q2 1.800 4 3.500l4 3 4-3v4.300l-4 3-7-5z"/></svg><span>Gmail</span></span>
      <span class="bm r86"><svg class="i16"><use href="#yt"/></svg><span>YouTube</span></span>
      <span class="bm r70"><svg class="i16" viewBox="0 0 16 16"><path fill="#34a853" d="M1 2h9v6l-9 6z"/><path fill="#fbbc04" d="M1 15l7-7 3 3-5 5z"/><path fill="#4285f4" d="M8 9l6 6.500H6z"/><path stroke="#fff" stroke-width="1.500" d="M1 14L12 3M7 9l7 7"/><path fill="#ea4335" d="M12 0a3.600 3.600 0 0 1 3.500 4c0 2-2.500 3-3.500 6-1-3-3.500-4-3.500-6A3.600 3.600 0 0 1 12 0z"/><circle cx="12" cy="3.800" r="1.300" fill="#8a1f1a"/><circle cx="4" cy="5" r="1.700" fill="none" stroke="#fff"/></svg><span>Maps</span></span>
      <span class="bm r83"><svg class="i16" viewBox="0 0 16 16"><path fill="#34a853" d="M3 2l9-1 1 5H4z"/><path fill="#ea4335" d="M12 3h3l-1 4h-3z"/><path fill="#fbbc04" d="M1 4h7v3H1z"/><rect x="1.500" y="6" width="13" height="9" rx="1" fill="#4285f4"/><text x="8" y="13" class="t-bold" font-size="7.500" fill="#fff">GE</text></svg><span>Noticias</span></span>
      <span class="bm"><svg class="i16"><use href="#trans"/></svg><span>Traducir</span></span>
      <span class="other"><svg class="fold"><use href="#folder"/></svg><span>Otros marcadores</span></span>
    </nav>
    <div class="page error">
      <svg class="sad" viewBox="0 0 33 42" shape-rendering="crispEdges"><path fill="#535353" fill-rule="evenodd" d="M0 0h27v3h3v3h3v36H0zM3 3v36h27V15H18V3zM21 3v9h9V6h-3V3z"/><path fill="#535353" d="M9 9h3v6H9zM12 27h10v3H12zM9 30h3v3H9zM22 30h3v3h-3z"/></svg>
      <h1>No se puede acceder a este sitio web</h1>
      <p class="msg">La página <strong>localhost</strong> ha rechazado la conexión.</p>
      <p class="try">Prueba a:</p>
      <ul><li>Comprobar la conexión</li><li><a>Comprobar el proxy y el cortafuegos</a></li></ul>
      <p class="errcode">ERR_CONNECTION_REFUSED</p>
      <div class="actionsrow"><button class="primary">Volver a cargar</button><button class="details">Detalles</button></div>
    </div>
    <div class="taskbar"><i></i></div>
  </section>
</main>
</body>
</html>
```
FILE: styles.css
```css
* { box-sizing: border-box; }
html, body { margin: 0; padding: 0; }
body { width: 2732px; height: 768px; overflow: hidden; background: #fff; font-family: "Open Sans", "Noto Sans", sans-serif; }
h1, h3, p, ul { margin: 0; padding: 0; }
svg { display: block; flex: none; overflow: visible; }
.defs { position: absolute; width: 0; height: 0; }

.t-bold, .t-black, .t-serif { text-anchor: middle; font-family: "Liberation Sans", sans-serif; font-weight: 700; }
.t-black { font-family: "Open Sans", sans-serif; font-weight: 800; }
.t-serif { font-family: "Liberation Serif", serif; font-weight: 400; }
.t-heavy { font-weight: 700; }

.i16 { width: 16px; height: 16px; }
.i18 { width: 18px; height: 18px; }
.i20 { width: 20px; height: 20px; }
.i20w { width: 20px; height: 16px; }
.i21 { width: 21px; height: 21px; }
.i22 { width: 22px; height: 22px; }
.i24 { width: 24px; height: 24px; }
.flip { transform: scaleX(-1); }

.desktop { display: flex; height: 768px; }
.edge { width: 2px; background: linear-gradient(#dde4ee 0, #d5e3f2 100px, #ebebeb 160px, #ebebeb 186px, #f8f8f8 186px, #f8f8f8 216px, #ebebeb 216px); }
.window { position: relative; display: flex; flex-direction: column; height: 768px; }
.blue { width: 1364px; --bar: #0c3560; --tool: #155399; --sep: #48698d; --cut: #0c3560; color: #fff; }
.orange { width: 1366px; --bar: #ffab41; --tool: #ffdfb8; --sep: #b87f3a; --cut: #ffab41; color: #202124; }

.tabbar { height: 34px; background: var(--bar); display: flex; justify-content: space-between; }
.tabs { display: flex; align-items: center; }
.blue .tabs { padding-left: 7px; }
.orange .tabs { padding-left: 8px; }
.tab { position: relative; display: flex; align-items: center; justify-content: center; width: 30px; height: 34px; }
.tab.wide { width: 31px; }
.tab::after { content: ""; position: absolute; right: 0; top: 8px; width: 1px; height: 19px; background: var(--sep); }
.tab.last::after { display: none; }
.gh1 { color: #191717; }
.gh2 { color: #26303c; }
.gray { color: #767676; }
.orange .gray { color: #696255; }
.tab.active { width: 32px; margin-left: -1px; background: var(--tool); border-radius: 8px 8px 0 0; }
.tab.active::before, .tab.active::after { content: ""; display: block; position: absolute; top: auto; bottom: 0; width: 8px; height: 8px; }
.tab.active::before { left: -8px; background: radial-gradient(circle at 0 0, transparent 7.5px, var(--tool) 8px); }
.tab.active::after { right: -8px; background: radial-gradient(circle at 100% 0, transparent 7.5px, var(--tool) 8px); }
.newtab { margin-left: 14px; }
.orange .tab { width: 39px; }
.orange .tab.long { width: 239px; justify-content: flex-start; padding: 0 7px 0 12px; }
.orange .tab.long.active { width: 240px; margin-left: 0; padding-right: 8px; }
.title { flex: 1; min-width: 0; margin: 0 5px 0 8px; font-size: 11.5px; white-space: nowrap; overflow: hidden; letter-spacing: -.18px; }
.fade { -webkit-mask-image: linear-gradient(to right, #000 150px, transparent 178px); mask-image: linear-gradient(to right, #000 150px, transparent 178px); }
.controls { display: flex; gap: 30px; padding: 6px 15px 0 0; }
.backstrip { position: absolute; z-index: 2; left: 102px; top: 0; width: 1162px; height: 3px; background: #333; border-bottom: 1px solid #111; }

.toolbar { height: 36px; background: var(--tool); display: flex; align-items: center; padding-left: 4px; }
.orange .toolbar { padding-left: 6px; }
.cell { position: relative; width: 32px; display: flex; justify-content: center; align-items: center; flex: none; }
.off { opacity: .42; }
.dim { color: #6b6258; }
.omnibox { height: 28px; border-radius: 14px; display: flex; align-items: center; margin-left: 6px; padding: 0 10px; white-space: nowrap; font-size: 13.5px; }
.blue .omnibox { width: 894px; background: #194373; color: #a4b4c7; margin-right: 8px; }
.orange .omnibox { width: 862px; background: #dfc4a2; color: #675b4d; margin-right: 6px; }
.insecure { margin-left: 9px; width: 90px; border-right: 1px solid #6681a0; height: 16px; line-height: 15px; letter-spacing: -.1px; }
.url { margin-left: 9px; letter-spacing: -.12px; }
.orange .url { margin-left: 8px; letter-spacing: -.08px; }
.url b { font-weight: 400; color: #fff; }
.orange .url b { color: #202124; }
.actions { display: flex; gap: 16px; margin-left: auto; }
.orange .actions { color: #6e6253; }
.pill { width: 188px; height: 28px; border-radius: 14px; box-shadow: inset 0 0 0 1px #3a6ca9; display: flex; align-items: center; justify-content: space-between; padding: 0 6px; margin-right: 2px; }
.slot { width: 16px; display: flex; justify-content: center; }
.brown { color: #5c6770; }
.count { position: absolute; left: 18px; top: 9px; width: 12px; height: 12px; background: #0a84ff; border-radius: 2px; font-size: 9px; line-height: 11px; font-style: normal; text-align: center; color: #111; }

.bookmarks { height: 33px; background: var(--tool); border-bottom: 1px solid #4d7bb1; display: flex; align-items: center; padding-left: 12px; font-size: 11.5px; --cut: var(--tool); white-space: nowrap; padding-bottom: 4px; }
.blue .bookmarks { padding-right: 11px; }
.orange .bookmarks { padding-left: 14px; padding-right: 11px; border-color: #c8af92; letter-spacing: -.22px; }
.bm { display: flex; align-items: center; gap: 8px; }
.w150 { width: 150px; } .w151 { width: 151px; } .w154 { width: 154px; } .w77 { width: 77px; }
.r71 { width: 71px; } .r86 { width: 86px; } .r70 { width: 70px; } .r83 { width: 83px; }
.l3 { letter-spacing: -.1px; }
.l6 { letter-spacing: -.2px; }
.l8 { letter-spacing: -.15px; }
.more { margin-left: auto; margin-right: 9px; font-size: 16px; line-height: 16px; font-weight: 700; }
.other { display: flex; align-items: center; border-left: 1px solid #5583b5; height: 16px; padding-left: 12px; gap: 8px; letter-spacing: -.2px; }
.orange .other { margin-left: auto; border-color: #c4a888; }
.other span { width: 94px; }
.fold { width: 14px; height: 16px; }

.page { flex: 1; background: #fff; }
.sis { font-family: "Liberation Sans", Arial, sans-serif; font-size: 14px; line-height: 20px; color: #333; padding-left: 111px; }
.panel { width: 1140px; height: 408px; border: 1px solid #337ab7; border-radius: 4px; overflow: hidden; }
.heading { height: 41px; background: #337ab7; color: #fff; font-size: 14px; font-weight: 700; line-height: 20px; padding: 10px 15px; letter-spacing: -.02px; }
.panelbody { padding: 22px 15px 0; }
.section { color: #3ab5bb; height: 28px; }
.row { display: grid; grid-template-columns: 159px 31px 159px 190px 30px 349px; height: 34px; margin-bottom: 22px; align-items: center; }
.row + .section { height: 29px; }
.row label { font-weight: 700; text-align: right; }
.first { grid-column: 1; }
.select { grid-column: 3; height: 34px; border: 1px solid #ccc; border-radius: 4px; display: flex; align-items: center; justify-content: space-between; padding: 0 5px 0 16px; color: #555; box-shadow: inset 0 1px 1px rgba(0,0,0,.075); }
.select svg { width: 10px; height: 6px; }
.second { grid-column: 4; }
.field { grid-column: 6; height: 34px; border: 1px solid #ccc; border-radius: 4px; padding: 0 12px; font: 14px "Liberation Sans", Arial, sans-serif; box-shadow: inset 0 1px 1px rgba(0,0,0,.075); }
.field::placeholder { color: #999; }
.lower { display: flex; padding-left: 190px; margin-top: -7px; align-items: flex-start; }
.captcha { width: 180px; }
.captcha p { width: 160px; }
.capimg { width: 180px; height: 50px; }
.code { display: block; width: 70px; height: 26px; border: 1px solid #767676; border-radius: 2px; }
.result { width: 465px; height: 71px; margin-left: 184px; border: 3px solid #3ab9be; display: flex; flex-direction: column; align-items: center; color: #3ab5bb; padding-top: 7px; gap: 13px; }
.result strong { color: #00f; }
.buttons { display: flex; gap: 3px; margin: -1px 0 0 206px; position: relative; }
.buttons button { height: 34px; background: #337ab7; border: 1px solid #2e6da4; border-radius: 4px; color: #fff; font: 14px "Liberation Sans", Arial, sans-serif; padding: 0; }
.b1 { width: 86px; } .b2 { width: 65px; }

.error { padding: 123px 0 0 383px; color: #5f6368; font-size: 15px; line-height: 24px; }
.sad { width: 33px; height: 42px; }
.error h1 { margin-top: 46px; font-size: 24px; line-height: 32px; font-weight: 500; color: #202124; white-space: nowrap; letter-spacing: -.3px; -webkit-text-stroke: .4px #202124; }
.msg { margin-top: 14px; letter-spacing: -.38px; }
.try { margin-top: 15px; letter-spacing: -.38px; }
.error ul { padding-left: 40px; letter-spacing: -.38px; }
.error a { color: #1a73e8; }
.errcode { font-size: 12px; margin-top: 16px; letter-spacing: -.3px; }
.actionsrow { width: 600px; display: flex; justify-content: space-between; align-items: flex-start; margin-top: 50px; }
.actionsrow button { font: 13px "Liberation Sans", Arial, sans-serif; border-radius: 4px; padding: 0; }
.primary { width: 120px; height: 31px; background: #1a73e8; color: #fff; border: 0; }
.details { width: 81px; height: 33px; background: #fff; color: #5f6368; border: 1px solid #9aa0a6; }
.taskbar { height: 2px; background: #dcd9d5; display: flex; }
.taskbar i { width: 36px; margin-left: 185px; background: #f2f1f0; }
```
